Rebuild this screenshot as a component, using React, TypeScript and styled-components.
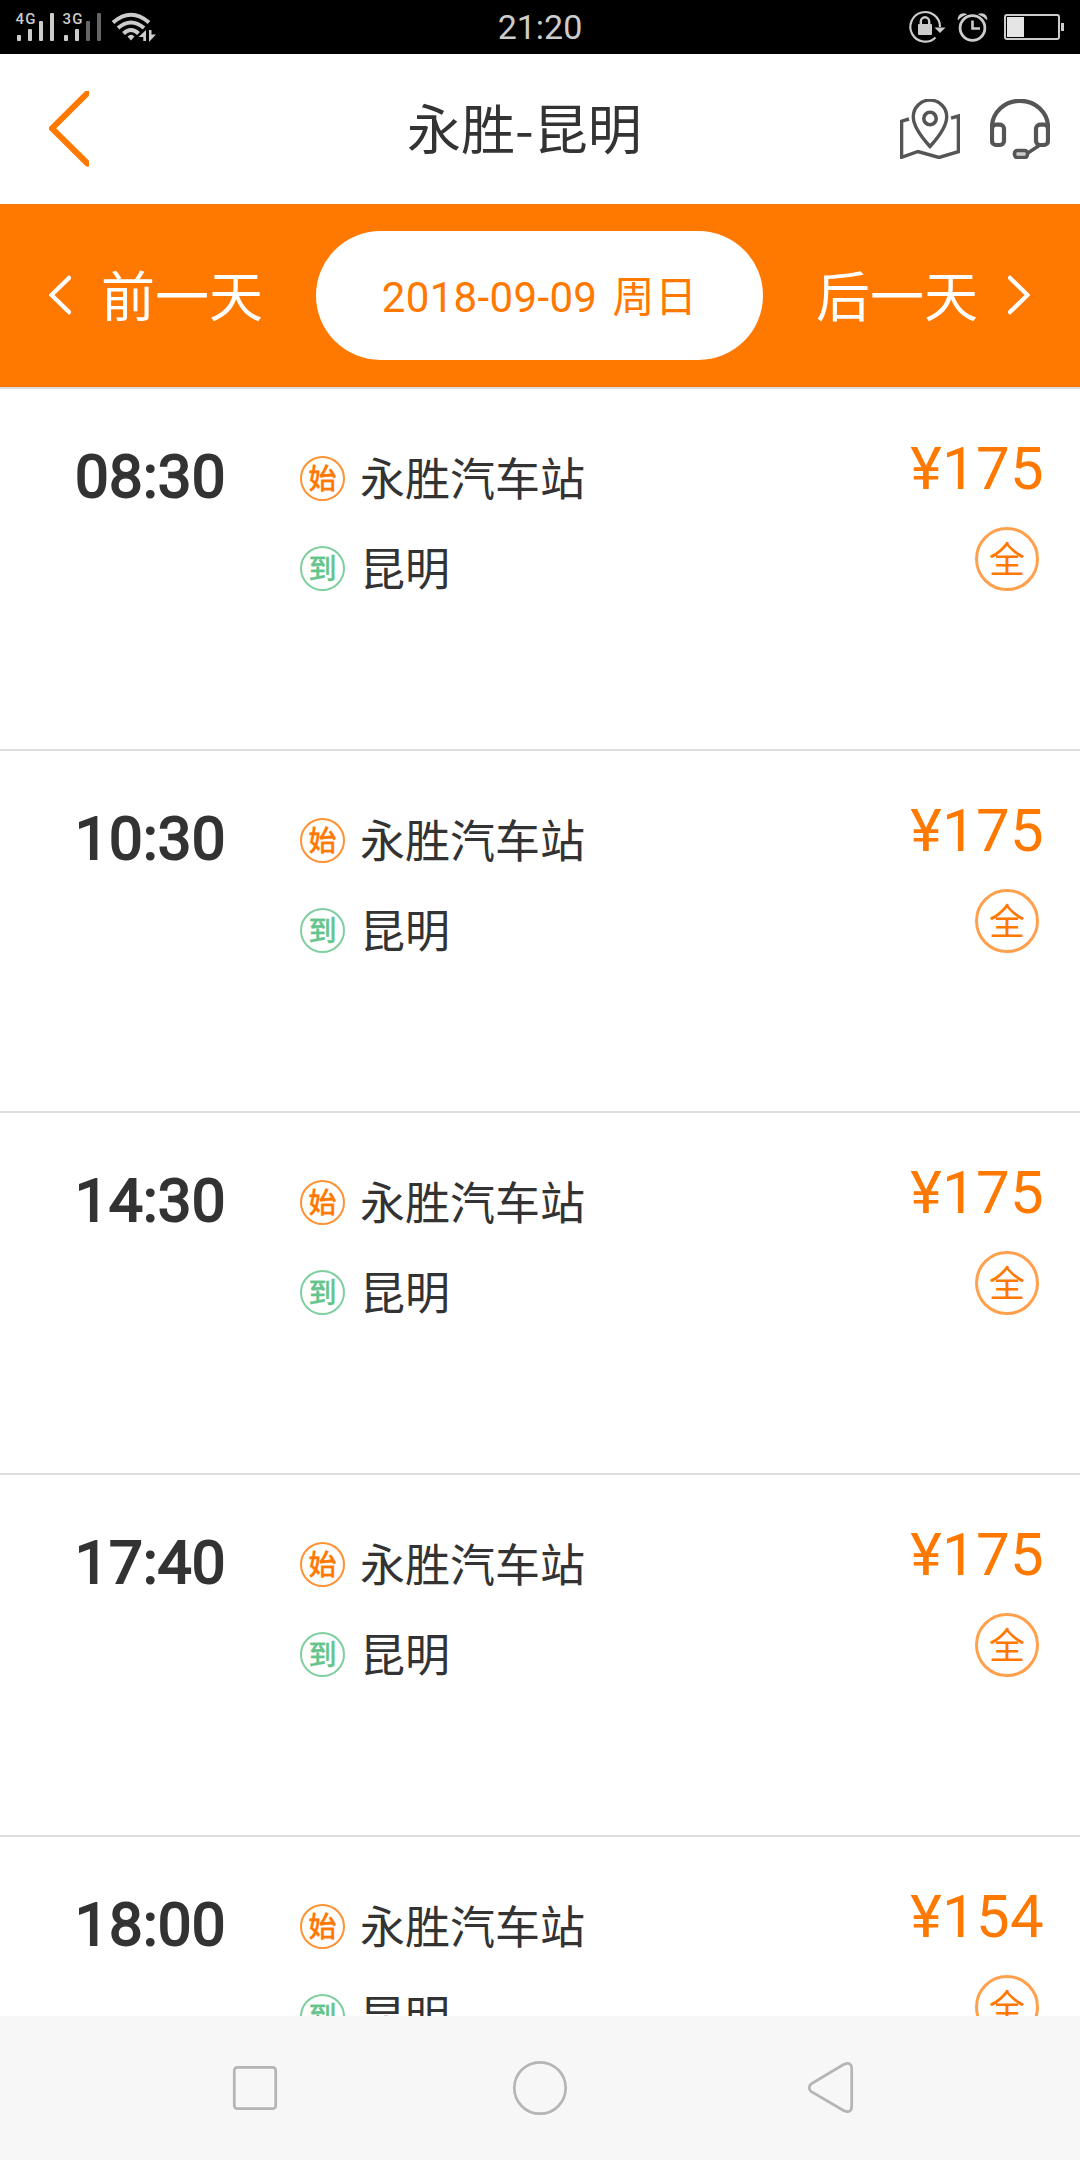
import React from 'react';
import styled, { createGlobalStyle } from 'styled-components';

const Global = createGlobalStyle`
  html, body { margin: 0; padding: 0; background: #fff; }
  body { font-family: Roboto, "Noto Sans CJK SC", sans-serif; color: #333; }
  * { box-sizing: border-box; }
  svg { display: block; flex: none; }
`;

const ORANGE = '#ff7800';
const GREEN = '#64c48c';

const Screen = styled.div`
  width: 1080px;
  height: 2160px;
  display: flex;
  flex-direction: column;
  overflow: hidden;
  background: #fff;
`;

const StatusBar = styled.div`
  height: 54px;
  flex: none;
  display: grid;
  grid-template-columns: 1fr auto 1fr;
  align-items: center;
  background: #000;
`;
const StatusTime = styled.span`
  font-size: 34px;
  line-height: 54px;
  color: #ccc;
`;
const StatusSide = styled.div<{ $end?: boolean }>`
  display: flex;
  justify-content: ${(p) => (p.$end ? 'flex-end' : 'flex-start')};
`;

const Header = styled.header`
  height: 150px;
  flex: none;
  display: grid;
  grid-template-columns: 358px 1fr 150px;
  align-items: center;
  padding: 0 30px 0 49px;
`;
const Title = styled.h1`
  margin: 0;
  padding-bottom: 5px;
  font-family: "Noto Sans CJK SC", sans-serif;
  font-size: 54px;
  font-weight: 400;
  line-height: 80px;
`;
const HeaderActions = styled.div`
  display: flex;
  justify-content: flex-end;
  gap: 30px;
`;

const DateBar = styled.nav`
  height: 185px;
  flex: none;
  display: grid;
  grid-template-columns: 267px 447px 1fr;
  align-items: center;
  padding: 0 50px 0 49px;
  background: ${ORANGE};
  border-bottom: 2px solid #ddd;
`;
const DayLink = styled.div<{ $end?: boolean }>`
  display: flex;
  align-items: center;
  gap: 30px;
  justify-content: ${(p) => (p.$end ? 'flex-end' : 'flex-start')};
  color: #fff;
  font-size: 54px;
  line-height: 80px;
`;
const DayLabel = styled.span`
  padding-top: 7px;
`;
const DatePill = styled.div`
  height: 129px;
  padding-bottom: 4px;
  border-radius: 65px;
  display: flex;
  align-items: center;
  justify-content: center;
  background: #fff;
  color: ${ORANGE};
  font-size: 42px;
  letter-spacing: 0.35px;
  word-spacing: 4.5px;
  white-space: pre;
`;

const List = styled.main`
  flex: 1;
  min-height: 0;
  overflow: hidden;
`;
const Row = styled.article`
  height: 362px;
  display: grid;
  grid-template-columns: 300px 1fr auto;
  align-items: start;
  padding-right: 36px;
  border-bottom: 2px solid #ddd;
`;
const Departure = styled.div`
  padding: 52px 0 0 75px;
  font-size: 60px;
  line-height: 72px;
  letter-spacing: 0.25px;
  -webkit-text-stroke: 2px #333;
`;
const Stops = styled.div`
  display: flex;
  flex-direction: column;
  gap: 24px;
  padding-top: 56px;
`;
const Stop = styled.div`
  display: flex;
  align-items: center;
  gap: 15px;
  height: 66px;
`;
const StopName = styled.span`
  padding-bottom: 4px;
  font-size: 45px;
`;
const Badge = styled.span<{ $color: string; $ring: string }>`
  width: 45px;
  height: 45px;
  padding-top: 3px;
  flex: none;
  display: flex;
  align-items: center;
  justify-content: center;
  border: 2px solid ${(p) => p.$ring};
  border-radius: 50%;
  color: ${(p) => p.$color};
  font-size: 28px;
  font-weight: 500;
  line-height: 1;
  -webkit-text-stroke: 0.3px ${(p) => p.$color};
`;
const Fare = styled.div`
  display: flex;
  flex-direction: column;
  align-items: flex-end;
  padding-top: 44px;
`;
const Price = styled.span`
  font-size: 60px;
  line-height: 72px;
  letter-spacing: 0.25px;
  color: ${ORANGE};
`;
const FullTag = styled.span`
  width: 64px;
  height: 64px;
  margin: 22px 5px 0 0;
  padding-top: 3px;
  display: flex;
  align-items: center;
  justify-content: center;
  border: 3px solid #ffa04d;
  border-radius: 50%;
  font-size: 36px;
  line-height: 1;
  color: ${ORANGE};
`;

const SystemNav = styled.footer`
  height: 144px;
  flex: none;
  background: #f7f7f7;
`;

const SignalIcons = () => (
  <svg width="170" height="54" viewBox="0 0 170 54" fill="#ccc">
    <g fontFamily="Roboto, sans-serif" fontSize="15" fontWeight="500">
      <text x="15.5" y="24" textLength="20">4G</text>
      <text x="62.5" y="24" textLength="20">3G</text>
    </g>
    <rect x="17" y="35" width="4" height="6" rx="1" />
    <rect x="28" y="29" width="4" height="12" rx="1" />
    <rect x="39" y="21" width="4" height="20" rx="1" />
    <rect x="50" y="13" width="4" height="28" rx="1" />
    <rect x="64" y="35" width="4" height="6" rx="1" />
    <rect x="75" y="29" width="4" height="12" rx="1" />
    <rect x="86" y="21" width="4" height="20" rx="1" fill="#666" />
    <rect x="97" y="13" width="4" height="28" rx="1" fill="#666" />
    <g fill="none" stroke="#ccc" strokeWidth="4">
      <path d="M113 22.5Q131 7 149 22.5" />
      <path d="M118 28Q131 17 144 28" />
      <path d="M123.500 33.500Q131 26.500 138.500 33.500" />
    </g>
    <path d="M127.500 36.500Q131 33 134.500 36.500L131 40.500ZM146 30V41H143.300V37H138.500ZM149 30H151.500V34.500H156L149 42Z" />
  </svg>
);

const StatusIcons = () => (
  <svg width="180" height="54" viewBox="900 0 180 54" fill="none" stroke="#ccc">
    <path d="M935.500 37.500A14.800 14.800 0 1 1 940 27" strokeWidth="2.200" />
    <path d="M934.500 27.500H945.500L940 33Z" fill="#ccc" stroke="none" />
    <rect x="918" y="24" width="14" height="11" rx="1" fill="#ccc" stroke="none" />
    <path d="M920.800 25V21.500a4.200 4.200 0 0 1 8.400 0V25" strokeWidth="2.400" />
    <circle cx="972.500" cy="28" r="12.400" strokeWidth="2.800" />
    <path d="M972.500 20.500V28.500H980" strokeWidth="2.600" />
    <path d="M957.800 20.300Q957.300 14 963 13.200Q965.500 13.200 967.200 14.300Q961.500 16.500 957.800 20.300ZM987.200 20.300Q987.700 14 982 13.200Q979.500 13.200 977.800 14.300Q983.500 16.500 987.200 20.300Z" fill="#ccc" stroke="none" />
    <rect x="1005" y="15" width="54" height="24" rx="2" strokeWidth="2" />
    <rect x="1007" y="17" width="17" height="20" fill="#e5e5e5" stroke="none" />
    <rect x="1061" y="23" width="3" height="8" fill="#ccc" stroke="none" />
  </svg>
);

const BackIcon = () => (
  <svg width="40" height="76" viewBox="0 0 40 76" fill="none" stroke={ORANGE} strokeWidth="6">
    <path d="M38.500 2L3 37.300L38.500 72.500" strokeLinecap="round" strokeLinejoin="round" />
  </svg>
);

const MapIcon = () => (
  <svg width="60" height="60" viewBox="0 0 60 60" fill="none" stroke="#555" strokeWidth="3.400">
    <path d="M9 20L1.600 22.200V58.300L18 52.500L39 58.500L58.400 52.700V17L51 19.200" />
    <path d="M30 47.500C25 42 13.300 29.500 13.300 17.800A16.700 16.700 0 0 1 46.700 17.800C46.700 29.500 35 42 30 47.500Z" />
    <circle cx="30" cy="19.500" r="6.200" strokeWidth="3.600" />
  </svg>
);

const HeadsetIcon = () => (
  <svg width="60" height="60" viewBox="0 0 60 60" fill="none" stroke="#555" strokeWidth="4.200">
    <path d="M2 30V28A28 26.200 0 0 1 58 28V30" />
    <rect x="2" y="25.700" width="12" height="20.300" rx="4" />
    <rect x="46" y="25.700" width="12" height="20.300" rx="4" />
    <path d="M50 46L37 54.500" strokeWidth="3.400" />
    <rect x="24.500" y="51.500" width="13" height="7" rx="3" fill="#ccc" strokeWidth="3.600" />
  </svg>
);

const Chevron = ({ right }: { right?: boolean }) => (
  <svg width="22" height="42" viewBox="0 0 22 42" fill="none" stroke="#fff" strokeWidth="4.200">
    <path d={right ? 'M0.500 1.500L19.500 20L0.500 38.500' : 'M21.500 1.500L2.500 20L21.500 38.500'} />
  </svg>
);

const NavIcons = () => (
  <svg width="1080" height="144" viewBox="0 2016 1080 144" fill="none" stroke="#b5b5b5" strokeWidth="2.700">
    <rect x="234.300" y="2067.300" width="41.400" height="41.400" rx="3" />
    <circle cx="540" cy="2088" r="25.700" />
    <path d="M811 2084L843.500 2064.500Q851.700 2061 851.700 2069V2106Q851.700 2114 843.500 2110.500L811 2091.500Q807.500 2087.700 811 2084Z" />
  </svg>
);

const trips = [
  { time: '08:30', price: 175 },
  { time: '10:30', price: 175 },
  { time: '14:30', price: 175 },
  { time: '17:40', price: 175 },
  { time: '18:00', price: 154 },
];

export default function App() {
  return (
    <Screen>
      <Global />
      <StatusBar>
        <StatusSide><SignalIcons /></StatusSide>
        <StatusTime>21:20</StatusTime>
        <StatusSide $end><StatusIcons /></StatusSide>
      </StatusBar>
      <Header>
        <BackIcon />
        <Title>永胜-昆明</Title>
        <HeaderActions><MapIcon /><HeadsetIcon /></HeaderActions>
      </Header>
      <DateBar>
        <DayLink><Chevron /><DayLabel>前一天</DayLabel></DayLink>
        <DatePill>2018-09-09 周日</DatePill>
        <DayLink $end><DayLabel>后一天</DayLabel><Chevron right /></DayLink>
      </DateBar>
      <List>
        {trips.map((t) => (
          <Row key={t.time}>
            <Departure>{t.time}</Departure>
            <Stops>
              <Stop><Badge $color={ORANGE} $ring="#ff9233">始</Badge><StopName>永胜汽车站</StopName></Stop>
              <Stop><Badge $color={GREEN} $ring="#7fcf9f">到</Badge><StopName>昆明</StopName></Stop>
            </Stops>
            <Fare>
              <Price>¥{t.price}</Price>
              <FullTag>全</FullTag>
            </Fare>
          </Row>
        ))}
      </List>
      <SystemNav><NavIcons /></SystemNav>
    </Screen>
  );
}
